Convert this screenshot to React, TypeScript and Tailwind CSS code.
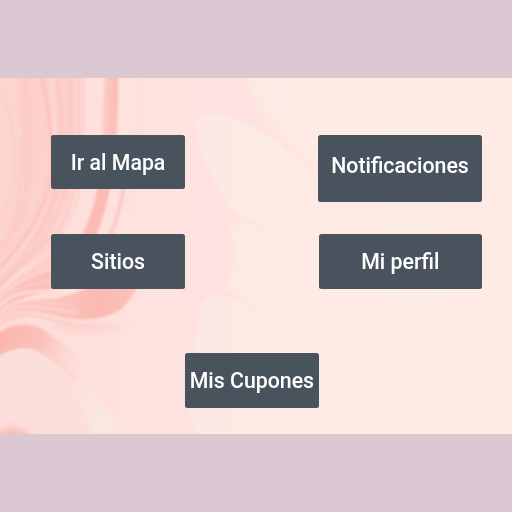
import React from "react";

function MarbleBackdrop() {
  return (
    <svg
      className="absolute inset-0 h-full w-full"
      viewBox="0 77.67 512 356.66"
      preserveAspectRatio="none"
      aria-hidden="true"
    >
      <defs>
        <linearGradient id="base" x1="0" x2="1" y1="0" y2="0">
          <stop offset="0" stopColor="#fddcd9" />
          <stop offset="0.25" stopColor="#fee2de" />
          <stop offset="0.42" stopColor="#ffe2df" />
        </linearGradient>
        <linearGradient id="cream" gradientUnits="userSpaceOnUse" x1="190" x2="512" y1="0" y2="0">
          <stop offset="0" stopColor="#fce8e2" />
          <stop offset="0.35" stopColor="#fdebe4" />
          <stop offset="1" stopColor="#feece4" />
        </linearGradient>
        <linearGradient id="tail" gradientUnits="userSpaceOnUse" x1="0" x2="137" y1="0" y2="0">
          <stop offset="0" stopColor="#fccac4" />
          <stop offset="0.5" stopColor="#fcc2bb" />
          <stop offset="0.75" stopColor="#fbb9b1" />
          <stop offset="1" stopColor="#fcc3bc" />
        </linearGradient>
        <linearGradient id="ridge" gradientUnits="userSpaceOnUse" x1="0" x2="80" y1="335" y2="385">
          <stop offset="0" stopColor="#fbb5ad" />
          <stop offset="0.4" stopColor="#fcc1ba" />
          <stop offset="0.8" stopColor="#fdd8d3" stopOpacity="0.5" />
          <stop offset="1" stopColor="#fee0dc" stopOpacity="0" />
        </linearGradient>
        <linearGradient id="band" gradientUnits="userSpaceOnUse" x1="97" x2="118" y1="0" y2="0">
          <stop offset="0" stopColor="#fddad6" />
          <stop offset="0.5" stopColor="#fcc6c0" />
          <stop offset="1" stopColor="#fbbab3" />
        </linearGradient>
        <linearGradient id="wedge" gradientUnits="userSpaceOnUse" x1="65" x2="110" y1="375" y2="434">
          <stop offset="0" stopColor="#fce5de" stopOpacity="0" />
          <stop offset="0.6" stopColor="#f9e7df" />
          <stop offset="1" stopColor="#fae7df" />
        </linearGradient>
        <filter id="s1" x="-20%" y="-20%" width="140%" height="140%">
          <feGaussianBlur stdDeviation="0.8" />
        </filter>
        <filter id="s2" x="-20%" y="-20%" width="140%" height="140%">
          <feGaussianBlur stdDeviation="1.5" />
        </filter>
        <filter id="s3" x="-30%" y="-30%" width="160%" height="160%">
          <feGaussianBlur stdDeviation="4" />
        </filter>
      </defs>
      <rect y="77" width="512" height="358" fill="url(#base)" />

      {/* cream half with its petal edges */}
      <path d="M239 50C246 90 263 118 283 137C300 153 324 172 338 204L300 230L246 226L236 250L233 286L280 322L250 450H540V50Z" fill="url(#cream)" filter="url(#s3)" />
      <g fill="url(#cream)" filter="url(#s2)">
        <path d="M194 121C200 111 219 112 237 119C270 132 296 154 322 180L360 260L270 238C255 228 241 220 234 212C217 188 199 155 194 121Z" />
        <path d="M229 226C245 219 275 232 308 262L370 350L310 340C280 322 250 304 224 288C233 275 236 258 235 248Z" />
        <path d="M201 305C206 294 223 292 240 299C266 309 287 326 303 334L400 445H203C178 411 194 385 193 352Z" />
      </g>
      <g fill="none" stroke="#fddfd9" filter="url(#s1)">
        <path d="M234 215C262 224 285 241 308 260" strokeWidth="1.4" opacity=".6" />
        <path d="M222 294C256 302 281 325 300 333C330 340 352 349 379 366C412 385 444 409 470 436" strokeWidth="1.3" opacity=".45" />
        <path d="M352 207C404 237 429 265 495 285M364 293C410 316 451 340 476 371C492 381 503 383 515 386" opacity=".25" />
      </g>

      {/* strands descending from the top left */}
      <path d="M-10 68H30C28 110 24 150 18 186C12 220 2 245 -10 265Z" fill="#fdd5d0" opacity=".8" filter="url(#s3)" />
      <path d="M16 68C22 110 18 150 14 186C10 220 2 245 -10 265V312C14 286 45 258 62 224C80 187 82 125 80 68Z" fill="#fdcbc5" opacity=".7" filter="url(#s3)" />
      <g fill="none" filter="url(#s2)">
        <path d="M0 84C18 132 22 185-5 232" stroke="#fccbc6" strokeWidth="3" opacity=".6" />
        <path d="M24 70C28 125 27 177 20 212C14 232 7 244-5 254" stroke="#fcc6c0" strokeWidth="10" opacity=".4" />
        <path d="M50 70C56 110 62 190 28 238C19 252 10 264-5 278" stroke="#feddd9" strokeWidth="4" opacity=".6" />
        <path d="M40 70C48 103 52 130 52 157C53 199 32 235-5 273" stroke="#fcbdb6" strokeWidth="3" opacity=".85" />
        <path d="M57 70C61 105 63 140 60 172C56 211 34 248-5 290" stroke="#fcc5be" strokeWidth="4" opacity=".8" />
        <path d="M70 70C72 125 70 166 65 191C55 226 33 254-5 294" stroke="#fdcbc5" strokeWidth="6" opacity=".8" />
        <path d="M46 150C42 195 30 220 8 244" stroke="#feddd9" strokeWidth="3" opacity=".35" />
        <path d="M92 70C93 125 91 174 84 200C78 216 72 228 66 238" stroke="#fedfdc" strokeWidth="11" />
      </g>
      <g fill="none" filter="url(#s1)">
        <path d="M78 70C80 120 80 165 74 192C64 235 42 258-5 299" stroke="#fcbfb8" strokeWidth="1.8" opacity=".75" />
        <path d="M82.500 70C85 125 83 174 77 200C68 232 50 252 29 270" stroke="#fcc6bf" strokeWidth="1.300" opacity=".8" />
        <path d="M66 200C57 229 38 252 8 280M60 194C50 226 32 250 2 278" stroke="#fee0dc" strokeWidth="1" opacity=".4" />
        <path d="M20 126C17 158 21 187 26 205M27 140C25 170 24 190 17 222" stroke="#fee0dc" strokeWidth="1.500" opacity=".3" />
      </g>
      <path d="M105 70H118C118 96 118 118 116 134C112 169 106 213 94 240H78C91 211 100 180 101 134Z" fill="url(#band)" filter="url(#s2)" />
      <path d="M117 70C118 96 117 116 116 136" fill="none" stroke="#fcbeb7" strokeWidth="1" opacity=".7" filter="url(#s1)" />
      <path d="M99 180H111C107 205 102 221 94 240H80C90 220 95 204 99 180Z" fill="#fcbcb4" filter="url(#s1)" />
      <path d="M124 186C120 206 117 220 109 238" fill="none" stroke="#fcc5be" strokeWidth="3.500" filter="url(#s2)" />
      <path d="M143 78C134 126 136 170 128 213" fill="none" stroke="#fddbd7" strokeWidth="3" opacity=".5" filter="url(#s2)" />

      {/* folds gathering at the left edge */}
      <path d="M-5 298C12 280 29 264 50 240H90V272C60 284 25 286-5 306Z" fill="#fdd2cc" filter="url(#s2)" />
      <g fill="none" filter="url(#s1)">
        <path d="M-5 288C14 268 34 252 52 236" stroke="#fcc6c0" strokeWidth="4" opacity=".7" />
        <path d="M-5 295C14 276 33 262 56 248" stroke="#fee0dc" strokeWidth="3" opacity=".8" />
        <path d="M-5 299C14 280 34 268 58 259" stroke="#fdc9c3" strokeWidth="2" opacity=".7" />
      </g>
      <path d="M-5 306C13 284 31 277 57 268L90 284C60 291 20 290-5 316Z" fill="#fcc1bb" filter="url(#s1)" />
      <path d="M-5 329C14 299 38 312 60 318C85 326 115 323 132 325C105 333 75 334 52 325C34 315 15 314-5 334Z" fill="#fdd0ca" filter="url(#s3)" />
      <path d="M-5 318C14 297 36 300 56 298C76 294 90 286 106 280H141C134 294 127 307 114 313C98 320 80 321 63 318C42 313 19 306-5 328Z" fill="url(#tail)" filter="url(#s1)" />
      <g fill="none" filter="url(#s1)">
        <path d="M-5 311C15 286 37 292 60 290C72 289 84 286 96 283" stroke="#fee0dc" strokeWidth="3" opacity=".8" />
        <path d="M-5 308C14 283 34 284 60 279" stroke="#fdd7d2" strokeWidth="1.500" opacity=".6" />
        <path d="M-5 317C14 291 36 302 72 305" stroke="#fdd7d2" strokeWidth="1.500" opacity=".6" />
        <path d="M-5 322C18 297 42 308 76 312" stroke="#fee0dc" strokeWidth="1.500" opacity=".75" />
        <path d="M-5 326C15 305 38 311 57 317C70 320 82 321 92 320" stroke="#fee2de" strokeWidth="1.500" opacity=".8" />
        <path d="M-5 329C14 310 38 316 60 322C72 325 84 325 96 325" stroke="#fcc6bf" strokeWidth="1.500" opacity=".5" />
        <path d="M-5 334C12 314 36 318 55 325" stroke="#fee0dc" strokeWidth="3" />
      </g>
      <path d="M-8 337C10 322 30 322 43 329C55 339 73 350 86 362L86 392C70 370 55 361 39 352C25 345 12 348-8 360Z" fill="url(#ridge)" filter="url(#s2)" />
      <path d="M-5 359C12 347 27 346 39 352C56 362 67 369 80 384C91 397 112 416 130 440H-5Z" fill="#fcdeda" filter="url(#s1)" />
      <path d="M39 351C56 361 66 368 77 380" fill="none" stroke="#fcc9c2" strokeWidth="2" opacity=".65" filter="url(#s1)" />
      <path d="M62 364C84 387 109 411 131 438H95C90 423 77 393 62 364Z" fill="url(#wedge)" filter="url(#s2)" />
      <ellipse cx="12" cy="442" rx="20" ry="13" fill="#fbb4ab" filter="url(#s3)" />
    </svg>
  );
}

function MenuButton({ label, className }: { label: string; className: string }) {
  return (
    <button
      className={`flex justify-center rounded-[2.5px] bg-[#49535e] text-[21.3px] leading-[26px] font-medium whitespace-nowrap text-white ${className}`}
    >
      {label}
    </button>
  );
}

export default function App() {
  return (
    <div className="flex h-screen w-full flex-col justify-center overflow-hidden bg-[#dcc8d3] font-[Roboto,sans-serif]">
      <main className="relative h-[356.7px] w-full overflow-hidden">
        <MarbleBackdrop />
        <div className="relative flex h-full flex-col items-center pt-[57px]">
          <div className="flex h-[99.2px] w-full items-start justify-between pr-[30.2px] pl-[51.3px]">
            <MenuButton label="Ir al Mapa" className="h-[54.8px] w-[133.5px] items-center pt-px" />
            <MenuButton label="Notificaciones" className="h-[66.9px] w-[163.6px] items-start pt-[18px]" />
          </div>
          <div className="flex h-[119.5px] w-full items-start justify-between pr-[30px] pl-[51.3px]">
            <MenuButton label="Sitios" className="h-[54.8px] w-[133.5px] items-center pt-px" />
            <MenuButton label="Mi perfil" className="h-[54.8px] w-[163.4px] items-center pt-px" />
          </div>
          <MenuButton label="Mis Cupones" className="mr-[8.3px] h-[54.8px] w-[133.6px] items-center" />
        </div>
      </main>
    </div>
  );
}
